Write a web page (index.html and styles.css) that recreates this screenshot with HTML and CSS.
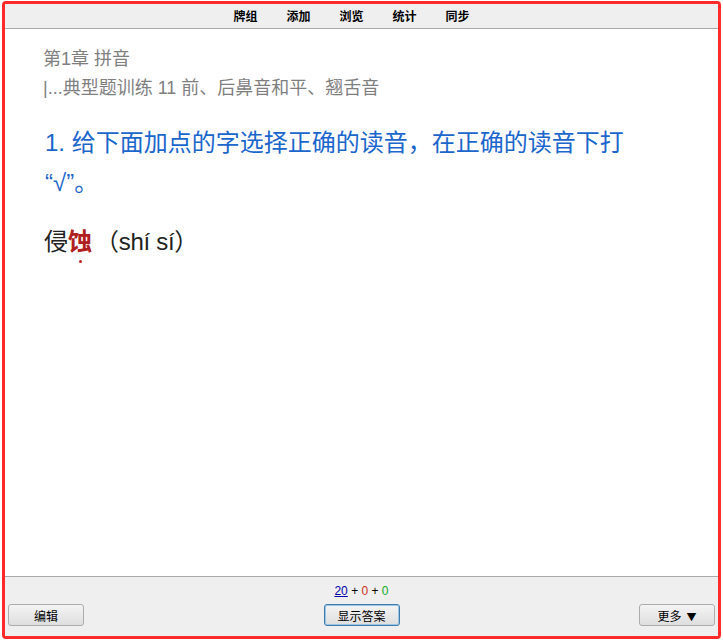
FILE: index.html
```html
<!DOCTYPE html>
<html lang="zh">
<head>
<meta charset="utf-8">
<title>Anki</title>
<link rel="stylesheet" href="styles.css">
</head>
<body>
<div class="frame">
  <div class="topbar">
    <nav class="menu">
      <span class="menu-item">牌组</span>
      <span class="menu-item">添加</span>
      <span class="menu-item">浏览</span>
      <span class="menu-item">统计</span>
      <span class="menu-item">同步</span>
    </nav>
  </div>
  <main class="card">
    <div class="chapter">第1章 拼音</div>
    <div class="section">|...典型题训练 11 前、后鼻音和平、翘舌音</div>
    <div class="question">1. 给下面加点的字选择正确的读音，在正确的读音下打“√”。</div>
    <div class="item">侵<span class="dotted">蚀</span><span class="reading">（shí sí）</span></div>
  </main>
  <footer class="bottombar">
    <div class="counts"><span class="c-new">20</span> + <span class="c-lrn">0</span> + <span class="c-rev">0</span></div>
    <div class="buttons">
      <button class="btn">编辑</button>
      <button class="btn btn-primary">显示答案</button>
      <button class="btn">更多<span class="caret">▼</span></button>
    </div>
  </footer>
</div>
</body>
</html>
```

FILE: styles.css
```css
html, body {
  margin: 0;
  padding: 0;
  background: #ffffff;
}

.frame {
  box-sizing: border-box;
  margin: 1px 2px 0 2px;
  height: 638px;
  border: 3px solid #ff2a2a;
  border-radius: 4px;
  display: flex;
  flex-direction: column;
  overflow: hidden;
  background: #ffffff;
}

.topbar {
  height: 24px;
  background: #efefef;
  border-bottom: 1px solid #a9a9a9;
  display: flex;
  align-items: center;
  justify-content: center;
  padding-right: 20px;
  flex-shrink: 0;
}

.menu {
  display: flex;
  gap: 29px;
}

.menu-item {
  font-family: "Noto Sans CJK SC", sans-serif;
  font-size: 12px;
  font-weight: bold;
  color: #000;
  line-height: 14px;
}

.card {
  flex: 1;
  padding: 16px 20px 0 38px;
  font-family: "Liberation Sans", "Noto Sans CJK SC", sans-serif;
}

.chapter,
.section {
  font-size: 18px;
  color: #7f7f7f;
  line-height: 29px;
}

.question {
  margin-top: 20px;
  margin-left: 2px;
  width: 620px;
  font-size: 24px;
  line-height: 40px;
  color: #1a66cc;
}

.item {
  margin-top: 19px;
  margin-left: 1px;
  font-size: 24px;
  line-height: 40px;
  color: #222222;
}

.reading {
  margin-left: 3px;
  letter-spacing: -0.3px;
}

.dotted {
  position: relative;
  color: #b02020;
  font-weight: bold;
}

.dotted::after {
  content: "";
  position: absolute;
  left: 11px;
  bottom: -8px;
  width: 3px;
  height: 3px;
  border-radius: 50%;
  background: #c02020;
}

.bottombar {
  height: 59px;
  background: #efefef;
  border-top: 1px solid #a9a9a9;
  flex-shrink: 0;
  display: flex;
  flex-direction: column;
}

.counts {
  text-align: center;
  font-family: "Liberation Sans", sans-serif;
  font-size: 12px;
  line-height: 14px;
  margin-top: 7px;
  color: #000;
}

.c-new {
  color: #0000aa;
  text-decoration: underline;
}

.c-lrn {
  color: #cc3322;
}

.c-rev {
  color: #11aa22;
}

.buttons {
  display: flex;
  justify-content: space-between;
  align-items: center;
  padding: 0 3px 0 3px;
  margin-top: 6px;
}

.btn {
  box-sizing: border-box;
  width: 76px;
  height: 22px;
  padding: 0;
  font-family: "Noto Sans CJK SC", sans-serif;
  font-size: 12px;
  color: #000;
  background: linear-gradient(#f4f4f4, #dedede);
  border: 1px solid #acacac;
  border-radius: 3px;
}

.caret {
  font-size: 10px;
  margin-left: 5px;
}

.btn-primary {
  border-color: #3d7bad;
  box-shadow: inset 0 0 0 1px #9cc4e4;
}
```
